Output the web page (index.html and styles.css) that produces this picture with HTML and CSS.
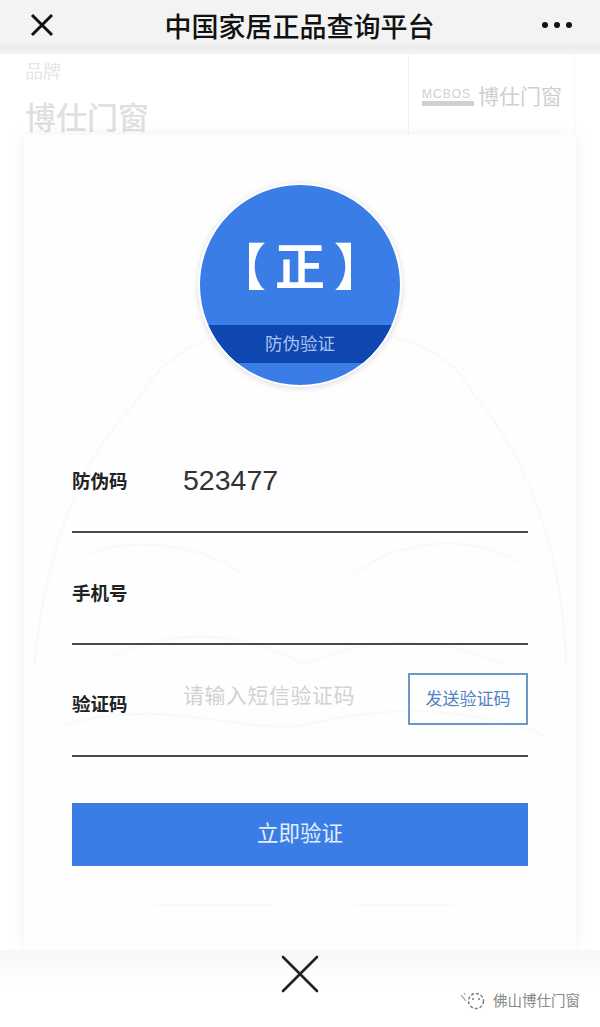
FILE: index.html
```html
<!DOCTYPE html>
<html lang="zh-CN">
<head>
    <meta charset="UTF-8">
    <meta name="viewport" content="width=device-width, initial-scale=1.0">
    <title>中国家居正品查询平台</title>
    <link rel="stylesheet" href="styles.css">
</head>
<body>
    <div class="page">
        <div class="topbar">
            <svg class="topbar-close" width="24" height="24" viewBox="0 0 24 24">
                <path d="M2 2 L22 22 M22 2 L2 22" stroke="#111" stroke-width="3" fill="none"/>
            </svg>
            <div class="topbar-title">中国家居正品查询平台</div>
            <div class="topbar-more">
                <span class="dot"></span><span class="dot"></span><span class="dot"></span>
            </div>
        </div>

        <div class="brand">
            <div class="brand-info">
                <div class="brand-label">品牌</div>
                <div class="brand-name">博仕门窗</div>
            </div>
            <div class="brand-logo">
                <div class="logo-mark">
                    <span class="logo-latin">MCBOS</span>
                    <span class="logo-bar"></span>
                </div>
                <span class="logo-name">博仕门窗</span>
            </div>
        </div>

        <div class="card">
            <!-- 背景の薄い線画 -->
            <svg class="card-art" width="552" height="815" viewBox="0 0 552 815">
                <path d="M10 530 C20 430 50 330 110 270 C150 200 210 190 270 200 C340 190 420 200 450 260 C510 330 540 430 542 530" stroke="#f8f9fb" stroke-width="2" fill="none"/>
                <path d="M60 420 C110 400 180 410 220 440 M330 440 C380 400 450 400 500 430 M90 520 C160 490 230 500 280 530 C340 500 420 500 480 530" stroke="#f8f9fb" stroke-width="2" fill="none"/>
                <path d="M40 590 C140 560 220 600 280 590 C360 570 440 570 520 600 M130 770 L250 770 M330 770 L430 770" stroke="#f8f9fb" stroke-width="2" fill="none"/>
            </svg>

            <div class="seal">
                <div class="seal-char">【正】</div>
                <div class="seal-band">防伪验证</div>
            </div>

            <div class="form">
                <div class="field">
                    <div class="field-label">防伪码</div>
                    <div class="field-value">523477</div>
                </div>
                <div class="field">
                    <div class="field-label">手机号</div>
                </div>
                <div class="field">
                    <div class="field-label field-label-up">验证码</div>
                    <div class="field-placeholder">请输入短信验证码</div>
                    <div class="send-btn">发送验证码</div>
                </div>
            </div>

            <div class="submit">立即验证</div>
        </div>

        <div class="footer">
            <svg class="modal-close" width="38" height="38" viewBox="0 0 38 38">
                <path d="M2 2 L36 36 M36 2 L2 36" stroke="#222" stroke-width="2.600" stroke-linecap="round" fill="none"/>
            </svg>
            <div class="watermark">
                <svg width="26" height="20" viewBox="0 0 26 20">
                    <path d="M1 5 L6 11 M4 3 L5.500 5" stroke="#aaa" stroke-width="1.200" fill="none"/>
                    <circle cx="16" cy="11" r="7.500" stroke="#777" stroke-width="1.400" stroke-dasharray="3 2" fill="none"/>
                    <circle cx="13" cy="9" r="1" fill="#777"/>
                    <circle cx="19" cy="9" r="1" fill="#777"/>
                </svg>
                <span class="watermark-text">佛山博仕门窗</span>
            </div>
        </div>
    </div>
</body>
</html>
```

FILE: styles.css
```css
* {
    box-sizing: border-box;
    margin: 0;
    padding: 0;
}

body {
    font-family: "Liberation Sans", "Noto Sans CJK SC", sans-serif;
    background-color: #fff;
    color: #222;
}

.page {
    width: 600px;
    height: 1027px;
    overflow: hidden;
}

.topbar {
    display: flex;
    align-items: center;
    justify-content: space-between;
    height: 54px;
    padding: 0 28px 4px 30px;
    background: linear-gradient(#f3f3f3 0, #f3f3f3 43px, #ececec 46px, #f4f4f4 54px);
}

.topbar-title {
    margin-left: 3px;
    font-size: 27px;
    font-weight: 500;
    color: #111;
}

.topbar-more {
    display: flex;
    gap: 6px;
}

.dot {
    width: 6px;
    height: 6px;
    border-radius: 50%;
    background: #111;
}

.brand {
    display: flex;
    height: 81px;
    padding: 0 25px;
    justify-content: space-between;
}

.brand-label {
    margin-top: 3px;
    font-size: 18px;
    color: #e6e6e6;
}

.brand-name {
    margin-top: 10px;
    font-size: 31px;
    font-weight: 500;
    color: #e0e0e0;
}

.brand-logo {
    display: flex;
    align-items: flex-start;
    gap: 4px;
    width: 167px;
    padding: 31px 0 0 13px;
    border-left: 1px solid #f3f3f3;
    border-right: 1px solid #f6f6f6;
}

.logo-mark {
    display: flex;
    flex-direction: column;
    width: 52px;
    margin-top: 3px;
}

.logo-latin {
    font-size: 12px;
    line-height: 12px;
    letter-spacing: 1px;
    color: #cfcfcf;
}

.logo-bar {
    height: 5px;
    margin-top: 1px;
    background: #d0d0d0;
}

.logo-name {
    font-size: 21px;
    line-height: 24px;
    color: #cfcfcf;
}

.card {
    position: relative;
    height: 815px;
    margin: 0 24px;
    padding: 48px 48px 0;
    background: #fefefe;
    box-shadow: 0 0 16px rgba(0, 0, 0, 0.06);
}

.card-art {
    position: absolute;
    left: 0;
    top: 0;
}

.seal {
    position: relative;
    overflow: hidden;
    width: 204px;
    height: 204px;
    margin: 0 auto;
    border: 2px solid #fff;
    border-radius: 50%;
    background: #3b7de6;
    box-shadow: 0 1px 6px rgba(0, 0, 0, 0.14);
    text-align: center;
}

.seal-char {
    margin-top: 48px;
    font-size: 50px;
    line-height: 70px;
    font-weight: 700;
    letter-spacing: 9px;
    text-indent: 9px;
    white-space: nowrap;
    color: #fff;
}

.seal-band {
    position: absolute;
    left: 0;
    right: 0;
    top: 140px;
    height: 38px;
    background: #0e47b0;
    color: #a9c2ee;
    font-size: 17.500px;
    line-height: 38px;
}

.form {
    position: relative;
    margin-top: 34px;
}

.field {
    display: flex;
    align-items: center;
    height: 112px;
    padding-top: 8px;
    border-bottom: 2px solid #4a4a4a;
}

.field-label {
    width: 111px;
    font-size: 18.500px;
    font-weight: 700;
    color: #222;
}

.field-label-up {
    margin-bottom: 2px;
}

.field-value {
    font-size: 28.500px;
    color: #333;
}

.field-placeholder {
    flex: 1;
    margin-bottom: 20px;
    font-size: 21px;
    letter-spacing: 0.500px;
    color: #d2d2d2;
}

.send-btn {
    width: 120px;
    height: 52px;
    margin-bottom: 10px;
    border: 2px solid #6c97c9;
    color: #4f83c4;
    font-size: 17px;
    line-height: 50px;
    text-align: center;
}

.submit {
    position: relative;
    height: 63px;
    margin-top: 46px;
    background: #3b7de6;
    color: #e4eefc;
    font-size: 21.500px;
    line-height: 63px;
    text-align: center;
}

.footer {
    position: relative;
    height: 77px;
    background: linear-gradient(#f7f7f7 0, #fcfcfc 20px, #fff 40px);
}

.modal-close {
    position: absolute;
    left: 281px;
    top: 5px;
}

.watermark {
    position: absolute;
    right: 20px;
    top: 39px;
    display: flex;
    align-items: center;
    gap: 7px;
}

.watermark-text {
    font-size: 14.500px;
    color: #888;
}
```
